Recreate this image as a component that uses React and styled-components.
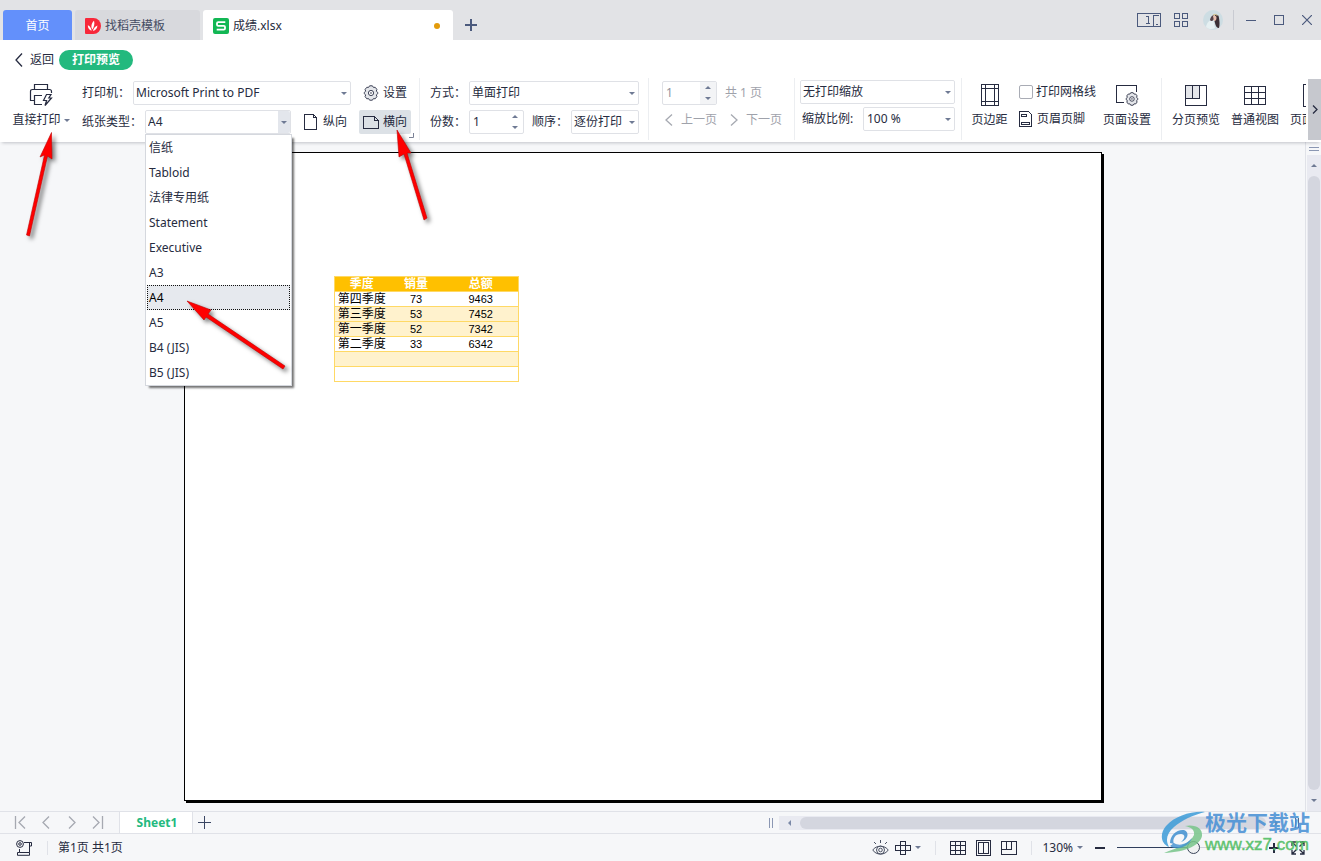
import React from "react";
import styled, { createGlobalStyle, css } from "styled-components";

const ink = "#262b40";
const slate = "#4b5a7d";

const Global = createGlobalStyle`
  *, *::before, *::after { box-sizing: border-box; }
  html, body { margin: 0; }
  body, button, input, select, table {
    font-family: "Noto Sans", "Noto Sans CJK SC", sans-serif;
    font-size: 12px;
    line-height: 16px;
    color: ${ink};
  }
  button { padding: 0; border: 0; background: none; white-space: nowrap; }
  svg { display: block; flex: none; }
`;

const Page = styled.div`
  position: relative;
  display: flex;
  flex-direction: column;
  height: 100vh;
  overflow: hidden;
  background: #fff;
`;

/* ---------- title bar ---------- */
const TitleBar = styled.header`
  display: flex;
  align-items: flex-end;
  flex: none;
  height: 40px;
  padding-left: 3px;
  background: #e2e3e6;
`;
const Tabs = styled.nav`
  display: flex;
  gap: 3px;
`;
const Tab = styled.button`
  display: flex;
  align-items: center;
  gap: 4px;
  height: 30px;
  width: ${(p) => p.$w}px;
  padding: 2px 10px 0;
  border-radius: 3px 3px 0 0;
  background: #d8d9dd;
  color: #454c63;
  ${(p) => p.$home && css`justify-content: center; background: #6390fb; color: #fff;`}
  ${(p) => p.$active && css`background: #fff; color: ${ink};`}
`;
const Dirty = styled.span`
  width: 6px;
  height: 6px;
  margin: 0 3px 0 auto;
  border-radius: 50%;
  background: #e39b0b;
`;
const AddTab = styled.button`
  width: 36px;
  height: 30px;
  display: grid;
  place-items: center;
`;
const WindowTools = styled.div`
  display: flex;
  align-items: center;
  align-self: stretch;
  margin-left: auto;
`;
const ToolBox = styled.button`
  display: grid;
  place-items: center;
  width: ${(p) => p.$w || 28}px;
  height: 40px;
`;
const ToolSep = styled.span`
  width: 1px;
  height: 20px;
  margin: 0 3px 0 4px;
  background: #c9cbd2;
`;

/* ---------- back row ---------- */
const BackRow = styled.div`
  display: flex;
  align-items: center;
  flex: none;
  gap: 5px;
  height: 36px;
  padding: 3px 15px 0;
`;
const Back = styled.button`
  display: flex;
  align-items: center;
  gap: 7px;
`;
const Pill = styled.h1`
  margin: 0;
  padding: 2px 13px;
  border-radius: 10px;
  background: #23b97e;
  color: #fff;
  font-size: 12px;
  font-weight: 700;
  line-height: 16px;
`;

/* ---------- ribbon ---------- */
const Ribbon = styled.div`
  position: relative;
  z-index: 2;
  display: flex;
  flex: none;
  height: 66px;
  background: #fff;
  box-shadow: 0 3px 3px -2px rgba(40, 45, 60, 0.25);
`;
const RibbonTrack = styled.div`
  display: flex;
  flex: 1;
  min-width: 0;
  overflow: ${(p) => (p.$clip ? "hidden" : "visible")};
  margin-right: ${(p) => (p.$clip ? 2 : 0)}px;
`;
const Group = styled.section`
  position: relative;
  display: flex;
  flex: none;
  width: ${(p) => p.$w}px;
  padding-left: ${(p) => p.$pad || 0}px;
  &::after {
    content: "";
    align-self: center;
    width: 1px;
    height: 62px;
    margin-left: auto;
    background: #eceef1;
  }
`;
const Rows = styled.div`
  display: flex;
  flex-direction: column;
  gap: ${(p) => (p.$tight ? 3 : 5)}px;
  padding-top: ${(p) => p.$top || 5}px;
`;
const Row = styled.div`
  position: relative;
  display: flex;
  align-items: center;
  gap: ${(p) => (p.$gap === undefined ? 8 : p.$gap)}px;
  height: 24px;
  padding-left: ${(p) => p.$pad || 0}px;
`;
const Field = styled.div`
  display: flex;
  align-items: center;
  gap: 3px;
`;
const Label = styled.label`
  white-space: nowrap;
  width: ${(p) => (p.$w ? p.$w + "px" : "auto")};
`;
const Muted = styled.span`
  color: #9fa2ab;
`;
const SelectWrap = styled.span`
  position: relative;
  display: flex;
  width: ${(p) => p.$w}px;
  height: 24px;
  border: 1px solid #dfe1e6;
  border-radius: 2px;
  background: #fff;
  > svg { position: absolute; right: 3px; top: 10px; pointer-events: none; }
`;
const NativeSelect = styled.select`
  appearance: none;
  flex: 1;
  min-width: 0;
  padding: 0 16px 0 ${(p) => p.$pad || 2}px;
  border: 0;
  border-radius: 2px;
  background: ${(p) => (p.$open ? "linear-gradient(to left, #e3e6ec 12px, #fff 12px)" : "#fff")};
`;
const SpinWrap = styled.span`
  display: flex;
  width: 55px;
  height: 24px;
  border: 1px solid #dfe1e6;
  border-radius: 2px;
  background: #fff;
`;
const SpinInput = styled.input`
  flex: 1;
  min-width: 0;
  padding: 0 3px;
  border: 0;
  background: none;
  &:disabled { color: #8f939e; }
`;
const SpinButtons = styled.span`
  display: flex;
  flex-direction: column;
  width: 16px;
  background: ${(p) => (p.$off ? "#f3f4f6" : "none")};
  button { flex: 1; display: grid; place-items: center; }
`;
const ChipButton = styled.button`
  display: flex;
  align-items: center;
  gap: 4px;
  width: 52px;
  height: 24px;
  padding: 0 4px;
  border-radius: 2px;
  background: ${(p) => (p.$on ? "#dce1e6" : "none")};
`;
const PageButton = styled.button`
  display: flex;
  align-items: center;
  gap: 8px;
  color: #9fa2ab;
`;
const BigButton = styled.button`
  display: flex;
  flex-direction: column;
  align-items: center;
  flex: none;
  gap: 5px;
  width: ${(p) => p.$w || 59}px;
  padding-top: 7px;
  > span { display: flex; align-items: center; gap: 3px; }
`;
const CheckStack = styled.div`
  display: flex;
  flex-direction: column;
  gap: 3px;
  width: 84px;
  padding-top: 4px;
  margin-left: 2px;
`;
const CheckRow = styled.label`
  display: flex;
  align-items: center;
  gap: 3px;
  height: 24px;
  white-space: nowrap;
  input {
    appearance: none;
    width: 14px;
    height: 14px;
    margin: 0;
    border: 1px solid #a9acb5;
    border-radius: 2px;
    background: #fff;
  }
`;
const FooterButton = styled.button`
  display: flex;
  align-items: center;
  gap: 5px;
  height: 24px;
`;
const Launcher = styled.svg`
  position: absolute;
  right: 6px;
  bottom: 4px;
`;
const RibbonScroll = styled.button`
  flex: none;
  width: 13px;
  margin: 3px 0 2px;
  background: #c6c8ce;
  display: grid;
  place-items: center;
`;

/* ---------- paper type list ---------- */
const Menu = styled.ul`
  position: absolute;
  left: 63px;
  top: 24px;
  z-index: 5;
  width: 147px;
  margin: 0;
  padding: 0 1px;
  list-style: none;
  border: 1px solid #d5d8de;
  background: #fff;
  box-shadow: 3px 3px 2px -1px rgba(0, 0, 0, 0.55);
`;
const MenuItem = styled.li`
  height: 25px;
  padding: 3px 1px;
  border: 1px solid transparent;
  line-height: 17px;
  ${(p) => p.$on && css`border: 1px dotted #111; background: #e6e9ee; color: #000;`}
`;

/* ---------- workspace ---------- */
const Workspace = styled.main`
  display: flex;
  flex: 1;
  min-height: 0;
  background: #f6f7f9;
`;
const Canvas = styled.div`
  display: flex;
  flex: 1;
  min-width: 0;
  padding: 10px 203px 10px 184px;
`;
const Paper = styled.article`
  flex: 1;
  padding: 123px 149px;
  border: 1px solid #000;
  background: #fff;
  box-shadow: 2px 2px 0 #000;
`;
const Sheet = styled.table`
  width: 185px;
  table-layout: fixed;
  border-collapse: collapse;
  border: 1px solid #ffd965;
  color: #000;
  td, th {
    height: 15px;
    padding: 1px 0 0;
    border-bottom: 1px solid #ffd965;
    font-size: 11px;
    line-height: 13px;
    text-align: center;
    white-space: nowrap;
    font-family: "Liberation Sans", "Noto Sans CJK SC", sans-serif;
  }
  thead th { background: #ffc000; color: #fff; font-size: 12px; font-weight: 700; }
  tbody th { font-size: 12px; font-weight: 400; }
  tbody tr:nth-child(2), tbody tr:nth-child(3), tbody tr:nth-child(5) { background: #fff2cd; }
`;
const VScroll = styled.div`
  display: flex;
  flex-direction: column;
  width: 16px;
  padding-left: 1px;
  border-left: 1px solid #e0e2e8;
`;
const Splitter = styled.span`
  display: grid;
  place-items: center;
  height: 13px;
`;
const VTrack = styled.div`
  display: flex;
  flex: 1;
  flex-direction: column;
  align-items: center;
  background: #e9eaf1;
`;
const Arrow = styled.button`
  display: grid;
  place-items: center;
  flex: none;
  width: ${(p) => p.$w || 14}px;
  height: ${(p) => p.$h || 14}px;
`;
const VThumb = styled.span`
  flex: 1;
  width: 12px;
  border-radius: 6px;
  background: #d4d6df;
`;

/* ---------- sheet bar ---------- */
const SheetBar = styled.div`
  display: flex;
  align-items: stretch;
  flex: none;
  height: 23px;
  border-top: 1px solid #e0e2e8;
  border-bottom: 1px solid #e0e2e8;
  background: #f6f7f9;
`;
const SheetNav = styled.div`
  display: flex;
  width: 119px;
  padding-left: 7px;
`;
const SheetTab = styled.button`
  width: 74px;
  padding-left: 2px;
  border: 1px solid #e0e2e8;
  border-width: 0 1px;
  background: #fff;
  color: #23b97e;
  font-weight: 700;
`;
const HScroll = styled.div`
  display: flex;
  align-items: center;
  flex: 1;
  margin-left: 554px;
  padding-right: 22px;
`;
const HTrack = styled.div`
  display: flex;
  flex: 1;
  align-items: center;
  height: 14px;
  margin: 0 8px 0 6px;
  background: #e9eaf1;
`;
const HThumb = styled.span`
  flex: 1;
  height: 12px;
  border-radius: 6px;
  background: #d4d6df;
`;

/* ---------- status bar ---------- */
const StatusBar = styled.footer`
  display: flex;
  align-items: center;
  flex: none;
  height: 27px;
  padding: 0 16px;
  background: #f6f7f9;
`;
const StatusSep = styled.span`
  width: 1px;
  height: 14px;
  margin: 0 ${(p) => p.$r || 10}px 0 14px;
  background: #e0e2e8;
`;
const StatusTools = styled.div`
  display: flex;
  align-items: center;
  margin-left: auto;
`;
const ViewButtons = styled.div`
  display: flex;
  align-items: center;
  gap: ${(p) => p.$gap || 10}px;
`;
const Plain = styled.button`
  display: flex;
  align-items: center;
  gap: 4px;
`;
const Zoom = styled.div`
  display: flex;
  align-items: center;
  gap: 12px;
`;
const Slider = styled.input`
  appearance: none;
  width: 140px;
  height: 13px;
  margin: 0;
  background: linear-gradient(to right, #2f3e5c 50%, #cfd2da 50%) center / 100% 1px no-repeat;
  &::-webkit-slider-thumb {
    appearance: none;
    width: 13px;
    height: 13px;
    border: 1px solid #3a4459;
    border-radius: 50%;
    background: #f0f1f2;
  }
`;

/* ---------- overlays ---------- */
const Pointer = styled.svg`
  position: absolute;
  left: ${(p) => p.$x}px;
  top: ${(p) => p.$y}px;
  z-index: 9;
  pointer-events: none;
  filter: drop-shadow(3px 3px 2px rgba(0, 0, 0, 0.5));
`;
const Watermark = styled.div`
  position: absolute;
  right: 11px;
  bottom: 6px;
  z-index: 8;
  display: flex;
  pointer-events: none;
`;
const WatermarkText = styled.div`
  display: flex;
  flex-direction: column;
  font-family: "Liberation Sans", "Noto Sans CJK SC", sans-serif;
  strong { color: rgba(73, 145, 213, 0.88); font-size: 21px; line-height: 24px; font-weight: 700; white-space: nowrap; }
  span { color: rgba(82, 190, 100, 0.88); font-size: 17px; line-height: 20px; font-weight: 400; -webkit-text-stroke: 0.5px rgba(82, 190, 100, 0.88); }
`;

/* ---------- icons ---------- */
const Icon = ({ w = 16, h = 16, c = ink, crisp = true, sw = 1, children }) => (
  <svg width={w} height={h} viewBox={`0 0 ${w} ${h}`} fill="none" stroke={c} strokeWidth={sw}
    shapeRendering={crisp ? "crispEdges" : "auto"} aria-hidden="true">{children}</svg>
);
const Caret = ({ up }) => (
  <svg width="6" height="3" viewBox="0 0 6 3" fill="#6f7a94" aria-hidden="true">
    <path d={up ? "M0 3L3 0L6 3Z" : "M0 0H6L3 3Z"} />
  </svg>
);
const Chevron = ({ right, bar, c = "#a6a9b1", w = 8, h = 13 }) => (
  <svg width={bar ? w + 4 : w} height={h} viewBox={`${bar && !right ? -4 : 0} 0 ${bar ? w + 4 : w} ${h}`}
    fill="none" stroke={c} strokeWidth="1.3" aria-hidden="true">
    <path d={right ? `M1 .5L${w - 1} ${h / 2}L1 ${h - 0.5}` : `M${w - 1} .5L1 ${h / 2}L${w - 1} ${h - 0.5}`} />
    {bar && <path d={right ? `M${w + 2.5} 0V${h}` : `M-2.5 0V${h}`} />}
  </svg>
);
const PlusIcon = ({ s = 13, sw = 1, c = ink }) => (
  <Icon w={s} h={s} c={c} sw={sw}><path d={`M0 ${s / 2}H${s}M${s / 2} 0V${s}`} /></Icon>
);
const gearPath =
  "M5.6 2.4L6.6.8H9.4L10.4 2.4L12.2 2.3L13.9 4.4L13.3 6.2L14.8 7.5V8.6L13.3 9.9L13.9 11.6L12.2 13.8L10.4 13.6L9.4 15.2H6.6L5.6 13.6L3.8 13.8L2.1 11.6L2.7 9.9L1.2 8.6V7.5L2.7 6.2L2.1 4.4L3.8 2.3Z";
const GearShape = () => (
  <>
    <path d={gearPath} fill="#e4e6ea" />
    <circle cx="8" cy="8" r="2.6" fill="#fff" /><circle cx="8" cy="8" r=".4" />
  </>
);
const Gear = () => (
  <Icon crisp={false} c="#3d4256"><GearShape /></Icon>
);
const PrinterIcon = () => (
  <Icon w={24} h={24} crisp={false} sw={1.2}>
    <path d="M5.5 6.5V1.5H18.5V6.5M5.5 17.5H1.5V8.5Q1.5 6.5 3.5 6.5H20.5Q22.5 6.5 22.5 8.5V10M13 21.5H5.5V12.5H13" />
    <path d="M17.5 11.5H22L19.8 15H22.5L16 22.5L17.6 17.5H14.5Z" />
  </Icon>
);
const PortraitIcon = () => (
  <Icon><path d="M1.5 .5H10.5L13.5 3.5V15.5H1.5Z" fill="#fff" /><path d="M10.5 .5V3.5H13.5" /></Icon>
);
const LandscapeIcon = () => (
  <Icon><path d="M.5 2.5H11.5L15.5 6.5V14.5H.5Z" /><path d="M11.5 2.5V6.5H15.5" /></Icon>
);
const HeaderIcon = () => (
  <Icon w={13} h={16}>
    <path d="M.5 .5H9.5L12.5 3.5V15.5H.5Z" /><path d="M2.5 3.5H7.5V5.5H2.5ZM2.5 11.5H10.5V13.5H2.5Z" />
  </Icon>
);
const GridIcon = ({ w = 22, h = 20 }) => (
  <Icon w={w} h={h}>
    <path d={`M.5 .5H${w - 0.5}V${h - 0.5}H.5ZM${Math.floor(w / 3) + 0.5} 0V${h}M${Math.floor((w * 2) / 3) + 0.5} 0V${h}M0 ${Math.floor(h / 3) + 0.5}H${w}M0 ${Math.floor((h * 2) / 3) + 0.5}H${w}`} />
  </Icon>
);
const DocerIcon = () => (
  <svg width="16" height="16" viewBox="0 0 16 16" aria-hidden="true">
    <path d="M1 0H8.5A7.5 8 0 0 1 8.5 16H1Q0 16 0 15V1Q0 0 1 0Z" fill="#f8283a" />
    <path d="M7.4 11.5C5.8 9.500 6 5.500 9 2.800C10 5.600 9 9 7.400 11.500Z" fill="#fff" />
    <path d="M6.6 12.8C4.200 12 2.800 10 2.800 7.200C5 8 6.400 10.200 6.600 12.800ZM8 13C8.400 10.800 9.800 8.800 12.400 7.600C12.400 10.400 10.600 12.600 8 13Z" fill="#fff" />
  </svg>
);
const SheetLogo = () => (
  <svg width="16" height="16" viewBox="0 0 16 16" aria-hidden="true">
    <rect width="16" height="16" rx="2" fill="#12b754" />
    <path d="M12.3 4.2H5.2Q4 4.2 4 5.3V6.7Q4 7.8 5.2 7.8H10.8Q12 7.8 12 9V10.4Q12 11.6 10.8 11.6H3.7" fill="none" stroke="#fff" strokeWidth="1.8" />
  </svg>
);
const Avatar = () => (
  <svg width="20" height="20" viewBox="0 0 20 20" aria-hidden="true">
    <circle cx="10" cy="10" r="10" fill="#cddde3" />
    <path d="M3 17C4 12 7 10 10 9L12 18C9 20 5 19 3 17Z" fill="#e6f0f2" />
    <path d="M12 5C14 4 16 5 16 8C16.500 11 17 15 16 18C14 18 12.500 16 12 13C11 10 11 7 12 5Z" fill="#3a2e35" />
    <path d="M7 10C7.500 7 9 5.500 11 5L11 9C10 11 8 12 7 10Z" fill="#54434a" />
    <path d="M10 6C12 5 13.500 6 13.500 8C13.500 10 12 11.500 11 11Z" fill="#e8c0b0" />
    <path d="M10 5Q12.500 3.500 14.500 5.500" stroke="#d9c58a" fill="none" />
  </svg>
);
const WatermarkLogo = () => (
  <svg width="44" height="44" viewBox="0 0 44 44" aria-hidden="true">
    <path d="M44 1C30 0 14 5 5 15C-1 22 -1 32 8 36C4 29 6 22 13 16C21 9 32 4 44 1Z" fill="#3b9bd8" opacity=".85" />
    <path d="M9 32C9 24 16 18 23 19C29 21 27 29 20 31C25 27 24 23 20 23C14 23 11 28 13 33Z" fill="#3f8fd0" opacity=".85" />
    <path d="M24 15C34 13 42 17 41 25C39 34 26 41 3 42C16 37 30 32 33 24C34 19 30 16 24 15Z" fill="#77c489" opacity=".85" />
    <path d="M13 32C19 36 27 32 31 27C28 36 16 40 9 35Z" fill="#3f8fd0" opacity=".8" />
  </svg>
);

/* ---------- small composites ---------- */
const Select = ({ id, w, pad, options, open }) => (
  <SelectWrap $w={w}>
    <NativeSelect id={id} $pad={pad} $open={open}>
      {options.map((o) => <option key={o}>{o}</option>)}
    </NativeSelect>
    <Caret />
  </SelectWrap>
);
const Spin = ({ id, off, label }) => (
  <SpinWrap>
    <SpinInput id={id} aria-label={label} type="text" defaultValue="1" disabled={off} />
    <SpinButtons $off={off}>
      <button aria-label="增加"><Caret up /></button>
      <button aria-label="减少"><Caret /></button>
    </SpinButtons>
  </SpinWrap>
);

const papers = ["信纸", "Tabloid", "法律专用纸", "Statement", "Executive", "A3", "A4", "A5", "B4 (JIS)", "B5 (JIS)"];
const sales = [["第四季度", 73, 9463], ["第三季度", 53, 7452], ["第一季度", 52, 7342], ["第二季度", 33, 6342], ["", "", ""], ["", "", ""]];

const red = { fill: "#fe0000", stroke: "#c00000", strokeWidth: 0.6, strokeLinejoin: "round" };

export default function App() {
  return (
    <Page>
      <Global />
      <TitleBar>
        <Tabs>
          <Tab $w={69} $home>首页</Tab>
          <Tab $w={125}><DocerIcon />找稻壳模板</Tab>
          <Tab $w={250} $active><SheetLogo />成绩.xlsx<Dirty /></Tab>
        </Tabs>
        <AddTab aria-label="新建"><PlusIcon s={12} sw={2} c={slate} /></AddTab>
        <WindowTools>
          <ToolBox $w={32} aria-label="窗口">
            <Icon w={24} h={14} c={slate}><path d="M.5 .5H23.500V13.500H.5ZM16.500 14V2.500H21.500M19 11.500H21M9 3.500H11.500V10.500M9 10.500H13" /></Icon>
          </ToolBox>
          <ToolBox $w={32} aria-label="应用">
            <Icon w={14} h={14} c={slate}><path d="M.5 .5H5.500V5.500H.5ZM8.500 .5H13.500V5.500H8.500ZM.5 8.500H5.500V13.500H.5ZM8.500 8.500H13.500V13.500H8.500Z" /></Icon>
          </ToolBox>
          <ToolBox $w={32} aria-label="账号"><Avatar /></ToolBox>
          <ToolSep />
          <ToolBox aria-label="最小化"><Icon w={10} h={10} c={slate}><path d="M0 5.500H10" /></Icon></ToolBox>
          <ToolBox aria-label="最大化"><Icon w={10} h={10} c={slate}><path d="M.5 .5H9.500V9.500H.5Z" /></Icon></ToolBox>
          <ToolBox aria-label="关闭"><Icon w={10} h={10} c={slate} crisp={false} sw={1.2}><path d="M0 0L10 10M10 0L0 10" /></Icon></ToolBox>
        </WindowTools>
      </TitleBar>

      <BackRow>
        <Back><Chevron c={ink} w={8} h={14} />返回</Back>
        <Pill>打印预览</Pill>
      </BackRow>

      <Ribbon>
        <RibbonTrack>
          <Group $w={420}>
            <BigButton $w={82}><PrinterIcon /><span>直接打印<Caret /></span></BigButton>
            <Rows>
              <Row>
                <Field><Label htmlFor="printer">打印机：</Label><Select id="printer" w={218} options={["Microsoft Print to PDF"]} /></Field>
                <ChipButton><Gear />设置</ChipButton>
              </Row>
              <Row>
                <Field><Label htmlFor="paper">纸张类型：</Label><Select id="paper" w={146} options={["A4"]} open /></Field>
                <ChipButton><PortraitIcon />纵向</ChipButton>
                <ChipButton $on><LandscapeIcon />横向</ChipButton>
                <Menu role="listbox" aria-label="纸张类型">
                  {papers.map((p) => <MenuItem key={p} role="option" aria-selected={p === "A4"} $on={p === "A4"}>{p}</MenuItem>)}
                </Menu>
              </Row>
            </Rows>
            <Launcher width="5" height="5" viewBox="0 0 5 5" fill="none" stroke="#7b8296"><path d="M4.500 0V4.500H0" /></Launcher>
          </Group>

          <Group $w={229} $pad={10}>
            <Rows>
              <Row><Field><Label htmlFor="side">方式：</Label><Select id="side" w={170} options={["单面打印"]} /></Field></Row>
              <Row>
                <Field><Label htmlFor="copies">份数：</Label><Spin id="copies" /></Field>
                <Field><Label htmlFor="order">顺序：</Label><Select id="order" w={68} options={["逐份打印"]} /></Field>
              </Row>
            </Rows>
          </Group>

          <Group $w={146} $pad={13}>
            <Rows $tight>
              <Row><Spin id="page" label="页码" off /><Muted>共 1 页</Muted></Row>
              <Row $gap={13} $pad={3}>
                <PageButton disabled><Chevron h={12} />上一页</PageButton>
                <PageButton disabled><Chevron right h={12} />下一页</PageButton>
              </Row>
            </Rows>
          </Group>

          <Group $w={167} $pad={5}>
            <Rows $tight $top={4}>
              <Row><Field><Select id="scaling" w={155} options={["无打印缩放"]} /></Field></Row>
              <Row $pad={2}>
                <Field><Label htmlFor="ratio" $w={58}>缩放比例:</Label><Select id="ratio" w={92} pad={3} options={["100 %"]} /></Field>
              </Row>
            </Rows>
          </Group>

          <Group $w={200}>
            <BigButton $w={55}><Icon w={24} h={24}><path d="M3.500 1.500H20.500V22.500H3.500ZM7.500 1V23M16.500 1V23M3 5.500H21M3 18.500H21" /></Icon><span>页边距</span></BigButton>
            <CheckStack>
              <CheckRow><input type="checkbox" />打印网格线</CheckRow>
              <FooterButton><HeaderIcon />页眉页脚</FooterButton>
            </CheckStack>
            <BigButton $w={48}><Icon w={24} h={24} crisp={false}>
              <path d="M8.500 19.500H1.500V2.500H21.500V8.500" shapeRendering="crispEdges" />
              <g transform="translate(10 9) scale(.87)"><GearShape /></g>
            </Icon><span>页面设置</span></BigButton>
          </Group>

          <RibbonTrack $clip>
            <BigButton $w={68}><Icon w={24} h={24}><path d="M1.500 2.500H15.500V15.500H1.500Z" fill="#e4e6ea" /><path d="M1.500 2.500H22.500V22.500H1.500ZM8.500 2V15.500" /></Icon><span>分页预览</span></BigButton>
            <BigButton $w={50}><Icon w={24} h={24}><path d="M1.500 3.500H22.500V21.500H1.500ZM8.500 3V22M15.500 3V22M1 9.500H23M1 15.500H23" /></Icon><span>普通视图</span></BigButton>
            <BigButton $w={68}><Icon w={24} h={24}><path d="M1.500 1.500H20.500V23.500H1.500Z" /></Icon><span>页面布局</span></BigButton>
          </RibbonTrack>
        </RibbonTrack>
        <RibbonScroll aria-label="更多"><Chevron right c={ink} w={6} h={9} /></RibbonScroll>
      </Ribbon>

      <Workspace>
        <Canvas>
          <Paper>
            <Sheet>
              <colgroup><col width="54" /><col width="55" /><col /></colgroup>
              <thead><tr><th>季度</th><th>销量</th><th>总额</th></tr></thead>
              <tbody>
                {sales.map(([q, n, t], i) => <tr key={i}><th scope="row">{q}</th><td>{n}</td><td>{t}</td></tr>)}
              </tbody>
            </Sheet>
          </Paper>
        </Canvas>
        <VScroll>
          <Splitter><Icon w={10} h={4} c="#8b97b3"><path d="M0 .5H10M0 3.500H10" /></Icon></Splitter>
          <VTrack>
            <Arrow $h={21} aria-label="向上"><Caret up /></Arrow>
            <VThumb />
            <Arrow $h={21} aria-label="向下"><Caret /></Arrow>
          </VTrack>
        </VScroll>
      </Workspace>

      <SheetBar>
        <SheetNav>
          <Arrow $w={26} $h={21} aria-label="首个"><Chevron bar /></Arrow>
          <Arrow $w={26} $h={21} aria-label="上个"><Chevron /></Arrow>
          <Arrow $w={26} $h={21} aria-label="下个"><Chevron right /></Arrow>
          <Arrow $w={26} $h={21} aria-label="末个"><Chevron right bar /></Arrow>
        </SheetNav>
        <SheetTab>Sheet1</SheetTab>
        <Arrow $w={22} $h={21} aria-label="新建工作表"><PlusIcon c="#3a4663" /></Arrow>
        <HScroll>
          <Icon w={4} h={10} c="#8b97b3"><path d="M.5 0V10M3.500 0V10" /></Icon>
          <HTrack>
            <Arrow $w={21} aria-label="向左"><svg width="3" height="6" viewBox="0 0 3 6" fill="#7c89a8"><path d="M3 0V6L0 3Z" /></svg></Arrow>
            <HThumb />
            <Arrow $w={21} aria-label="向右"><svg width="3" height="6" viewBox="0 0 3 6" fill="#7c89a8"><path d="M0 0V6L3 3Z" /></svg></Arrow>
          </HTrack>
          <Icon w={4} h={10} c="#53658f"><path d="M.5 0V10M3.500 0V10" /></Icon>
        </HScroll>
      </SheetBar>

      <StatusBar>
        <Icon w={17} h={16} crisp={false}>
          <circle cx="4" cy="4" r="3.400" /><circle cx="4" cy="4" r="1.300" />
          <path d="M8 2.500H15.500V6H13.500M13.500 3V12.500M3.500 9V12.500H1.500V15.300H13.500V12.500H3.500" />
        </Icon>
        <StatusSep />
        <span>第1页 共1页</span>
        <StatusTools>
          <ViewButtons $gap={6}>
            <Plain aria-label="护眼模式"><Icon w={17} h={16} crisp={false} c="#4a5163">
              <path d="M.8 10C4 5 13 5 16.200 10C13 15.500 4 15.500 .8 10Z" /><circle cx="8.500" cy="10" r="4" /><circle cx="8.500" cy="10" r="1.800" />
              <path d="M8.500 0V3M2 2L4 4M15 2L13 4" />
            </Icon></Plain>
            <Plain aria-label="阅读模式"><Icon w={16} h={16}><path d="M5.500 1.500H10.500V14.500H5.500ZM.5 5.500H15.500V10.500H.5Z" /></Icon><Caret /></Plain>
          </ViewButtons>
          <StatusSep $r={14} />
          <ViewButtons>
            <Plain aria-label="普通视图"><GridIcon w={16} h={14} /></Plain>
            <Plain aria-label="页面视图"><Icon w={15} h={16}><path d="M.5 .5H14.500V15.500H.5ZM2.500 2.500H12.500V13.500H2.500ZM7.500 3V13" /></Icon></Plain>
            <Plain aria-label="分页视图"><Icon w={16} h={14}><path d="M.5 .5H15.500V13.500H.5ZM5.500 0V8.500M10.500 0V8.500M0 8.500H10.500" /></Icon></Plain>
          </ViewButtons>
          <StatusSep />
          <Zoom>
            <Plain>130%<Caret /></Plain>
            <Plain aria-label="缩小"><Icon w={10} h={10} sw={2}><path d="M0 5H10" /></Icon></Plain>
            <Slider type="range" defaultValue="55" aria-label="缩放" />
            <Plain aria-label="放大"><PlusIcon s={10} sw={2} /></Plain>
            <Plain aria-label="全屏"><Icon w={14} h={14} crisp={false} sw={1.3}><path d="M1 5V1H5M9 1H13V5M13 9V13H9M5 13H1V9M1 1L5.500 5.500M13 1L8.500 5.500M13 13L8.500 8.500M1 13L5.500 8.500" /></Icon></Plain>
          </Zoom>
        </StatusTools>
      </StatusBar>

      <Pointer $x={20} $y={125} width="45" height="120" viewBox="20 125 45 120"><path {...red} d="M51.500 132.500L52 159L47.500 156L29.500 236L26.500 235L44.500 155L40 157Z" /></Pointer>
      <Pointer $x={180} $y={295} width="115" height="85" viewBox="180 295 115 85"><path {...red} d="M187 301L211 310L208 314L285 366L283 369L206 317L204 320Z" /></Pointer>
      <Pointer $x={390} $y={125} width="50" height="105" viewBox="390 125 50 105"><path {...red} d="M397 130L411 153L407 153L427 218L424 220L404 154L399 157Z" /></Pointer>

      <Watermark aria-hidden="true">
        <WatermarkLogo />
        <WatermarkText><strong>极光下载站</strong><span>www.xz7.com</span></WatermarkText>
      </Watermark>
    </Page>
  );
}
